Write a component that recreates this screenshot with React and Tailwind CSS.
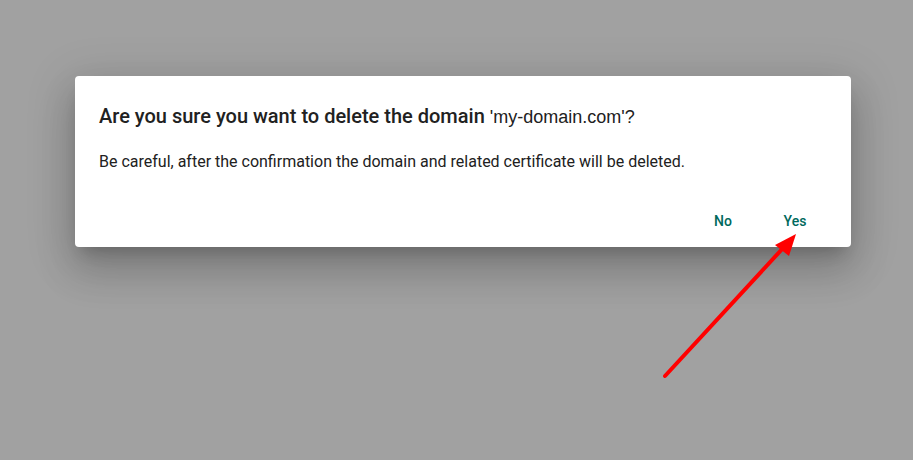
import React from "react";

function Arrow() {
  return (
    <svg
      className="pointer-events-none absolute left-0 top-0"
      width="913"
      height="460"
      viewBox="0 0 913 460"
    >
      <line
        x1="665"
        y1="376"
        x2="784"
        y2="247"
        stroke="#ff0000"
        strokeWidth="4"
        strokeLinecap="round"
      />
      <polygon points="796,234 775,245 789,256" fill="#ff0000" />
    </svg>
  );
}

export default function App() {
  const btn =
    "min-w-[64px] h-9 rounded px-2 text-sm font-medium text-[#00695c] hover:bg-[#00695c]/5";

  return (
    <div className="relative h-[460px] w-[913px] overflow-hidden bg-[#a1a1a1] font-['Roboto',sans-serif]">
      <div className="pl-[75px] pt-[76px]">
        <div className="w-[776px] rounded bg-white shadow-[0_11px_15px_-7px_rgba(0,0,0,0.2),0_24px_38px_3px_rgba(0,0,0,0.14),0_9px_46px_8px_rgba(0,0,0,0.12)]">
          <div className="px-6 pt-6">
            <h2 className="text-[20px] leading-8 font-medium text-[#212121]">
              Are you sure you want to delete the domain{" "}
              <span className="font-['Liberation_Sans',sans-serif] text-[18px] font-normal">
                'my-domain.com'?
              </span>
            </h2>
          </div>
          <div className="px-6 pt-[17px] pb-[29px]">
            <p className="text-base leading-6 text-[#212121]">
              Be careful, after the confirmation the domain and related
              certificate will be deleted.
            </p>
          </div>
          <div className="flex justify-end gap-2 pb-2 pr-6">
            <button className={btn}>No</button>
            <button className={btn}>Yes</button>
          </div>
        </div>
      </div>
      <Arrow />
    </div>
  );
}
